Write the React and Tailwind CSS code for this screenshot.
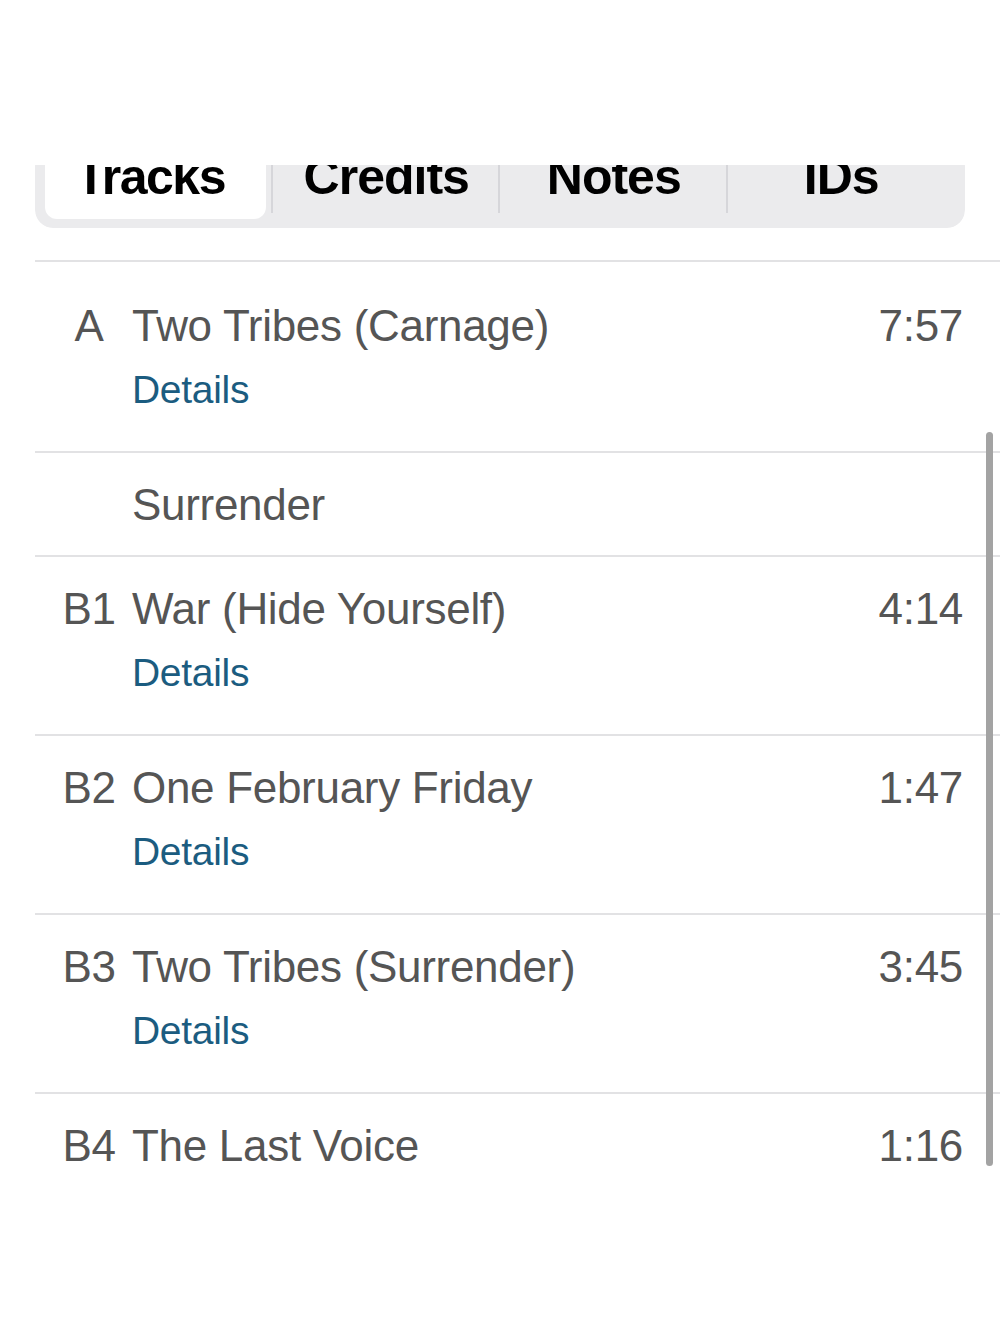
import React from "react";

const tabs = ["Tracks", "Credits", "Notes", "IDs"];

function Track({ pos, title, time, details, first }) {
  return (
    <div className={`border-t-2 border-[#e2e2e4] ${first ? "pt-[38px]" : "pt-[26px]"} ${details ? "pb-[38px]" : "pb-[24px]"} pr-[37px] pl-[19px]`}>
      <div className="flex items-center h-[52px]">
        <div className="w-[70px] text-center">{pos}</div>
        <div className="ml-[8px] flex-1">{title}</div>
        <div className="text-right">{time}</div>
      </div>
      {details && (
        <div className="mt-[15px] ml-[78px] h-[46px] flex items-center text-[39px] text-[#1b5c80]">Details</div>
      )}
    </div>
  );
}

export default function App() {
  return (
    <div
      className="relative w-[1000px] h-[1333px] bg-white overflow-hidden text-[#555] text-[44px] tracking-[-0.3px]"
      style={{ fontFamily: '"Liberation Sans", Arial, sans-serif' }}
    >
      <div className="pt-[165px]">
        <div className="mx-[35px] h-[63px] overflow-hidden rounded-b-[18px]">
          <div className="-mt-[16px] bg-[#ebebed] rounded-[18px] px-[10px] pb-[9px] grid grid-cols-4">
            {tabs.map((t, i) => (
              <div
                key={t}
                className={`relative h-[70px] flex justify-center pt-[3px] ${i === 0 ? "bg-white rounded-[12px] mr-[7px] pr-[10px]" : ""}`}
              >
                <span className={`text-[50px] leading-[50px] font-bold text-black ${i === 0 ? "tracking-[-1.5px]" : "tracking-[-1px]"}`}>{t}</span>
                {i < 3 && <div className={`absolute top-0 h-[64px] w-[2px] bg-[#d6d6da] ${i === 0 ? "-right-[7px]" : "right-0"}`} />}
              </div>
            ))}
          </div>
        </div>
      </div>

      <div className="mt-[32px] ml-[35px]">
        <Track first pos="A" title="Two Tribes (Carnage)" time="7:57" details />
        <div className="border-t-2 border-[#e2e2e4] pt-[26px] pb-[24px] pl-[97px]">
          <div className="h-[52px] flex items-center">Surrender</div>
        </div>
        <Track pos="B1" title="War (Hide Yourself)" time="4:14" details />
        <Track pos="B2" title="One February Friday" time="1:47" details />
        <Track pos="B3" title="Two Tribes (Surrender)" time="3:45" details />
        <Track pos="B4" title="The Last Voice" time="1:16" />
      </div>

      <div className="absolute left-[986px] top-[432px] w-[7px] h-[734px] rounded-full bg-[#a3a3a3]" />
    </div>
  );
}
